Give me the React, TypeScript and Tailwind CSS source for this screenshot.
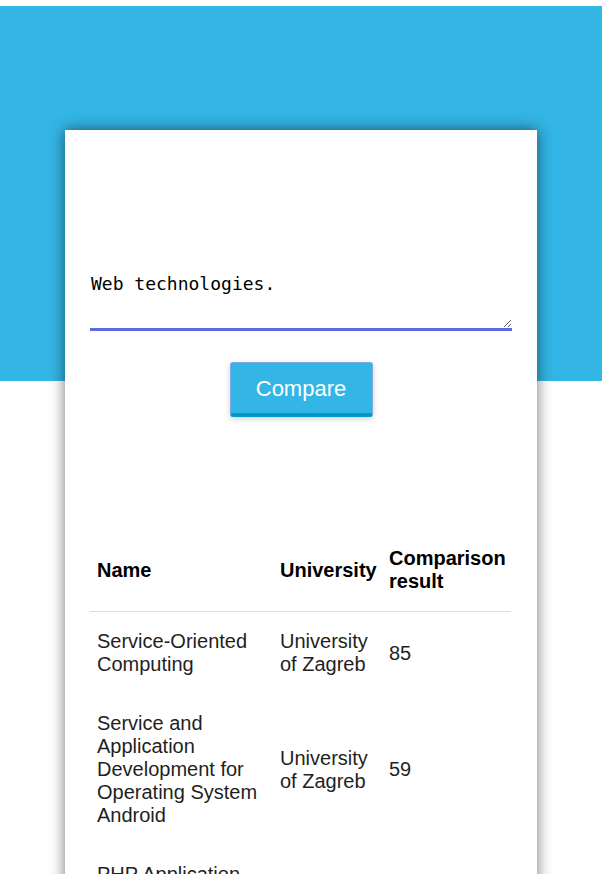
import { useState } from "react";

const results = [
  { name: "Service-Oriented Computing", university: "University of Zagreb", score: 85 },
  {
    name: "Service and Application Development for Operating System Android",
    university: "University of Zagreb",
    score: 59,
  },
  { name: "PHP Application Development for the Web", university: "University of Zagreb", score: 52 },
];

const App = () => {
  const [text, setText] = useState("Web technologies.");

  return (
    <div className="min-h-screen bg-white pt-[6px] font-['Liberation_Sans',Arial,sans-serif] overflow-hidden">
      {/* blue header band */}
      <div className="w-[602px] h-[375px] bg-[#33b5e5]" />

      {/* card */}
      <div className="relative -mt-[251px] ml-[65px] w-[472px] bg-white shadow-[0_0_14px_rgba(0,0,0,0.55)] px-[25px] pt-[140px] pb-10">
        <textarea
          value={text}
          onChange={(e) => setText(e.target.value)}
          spellCheck={false}
          className="block w-[422px] h-[61px] pt-[3px] px-[1px] border-0 border-b-[3px] border-[#5c6bdf] outline-none resize-y text-[18px] leading-[21px] text-black font-['DejaVu_Sans_Mono',Consolas,monospace]"
        />

        <div className="flex justify-center mt-[31px]">
          <button className="w-[143px] h-[55px] rounded-[3px] bg-[#33b5e5] border border-[#7aa8e8] border-b-[4px] border-b-[#0099cc] text-white text-[22px] shadow-[0_2px_6px_rgba(0,0,0,0.18)]">
            Compare
          </button>
        </div>

        <table className="mt-[112px] w-[421px] table-fixed border-collapse text-[20px] leading-[23px] text-[#1f1f1f]">
          <colgroup>
            <col className="w-[183px]" />
            <col className="w-[109px]" />
            <col className="w-[129px]" />
          </colgroup>
          <thead>
            <tr className="border-b border-[#dddddd]">
              <th className="text-left font-bold text-black pl-[7px] pr-[4px] py-[18px] align-middle">Name</th>
              <th className="text-left font-bold text-black pl-[7px] pr-[2px] py-[18px] align-middle whitespace-nowrap">
                University
              </th>
              <th className="text-left font-bold text-black pl-[7px] pr-[2px] py-[18px] align-middle whitespace-nowrap">
                Comparison
                <br />
                result
              </th>
            </tr>
          </thead>
          <tbody>
            {results.map((r) => (
              <tr key={r.name}>
                <td className="pl-[7px] pr-[7px] py-[18px] align-middle">{r.name}</td>
                <td className="pl-[7px] pr-[7px] py-[18px] align-middle">{r.university}</td>
                <td className="pl-[7px] pr-[7px] py-[18px] align-middle">{r.score}</td>
              </tr>
            ))}
          </tbody>
        </table>
      </div>
    </div>
  );
};

export default App;
